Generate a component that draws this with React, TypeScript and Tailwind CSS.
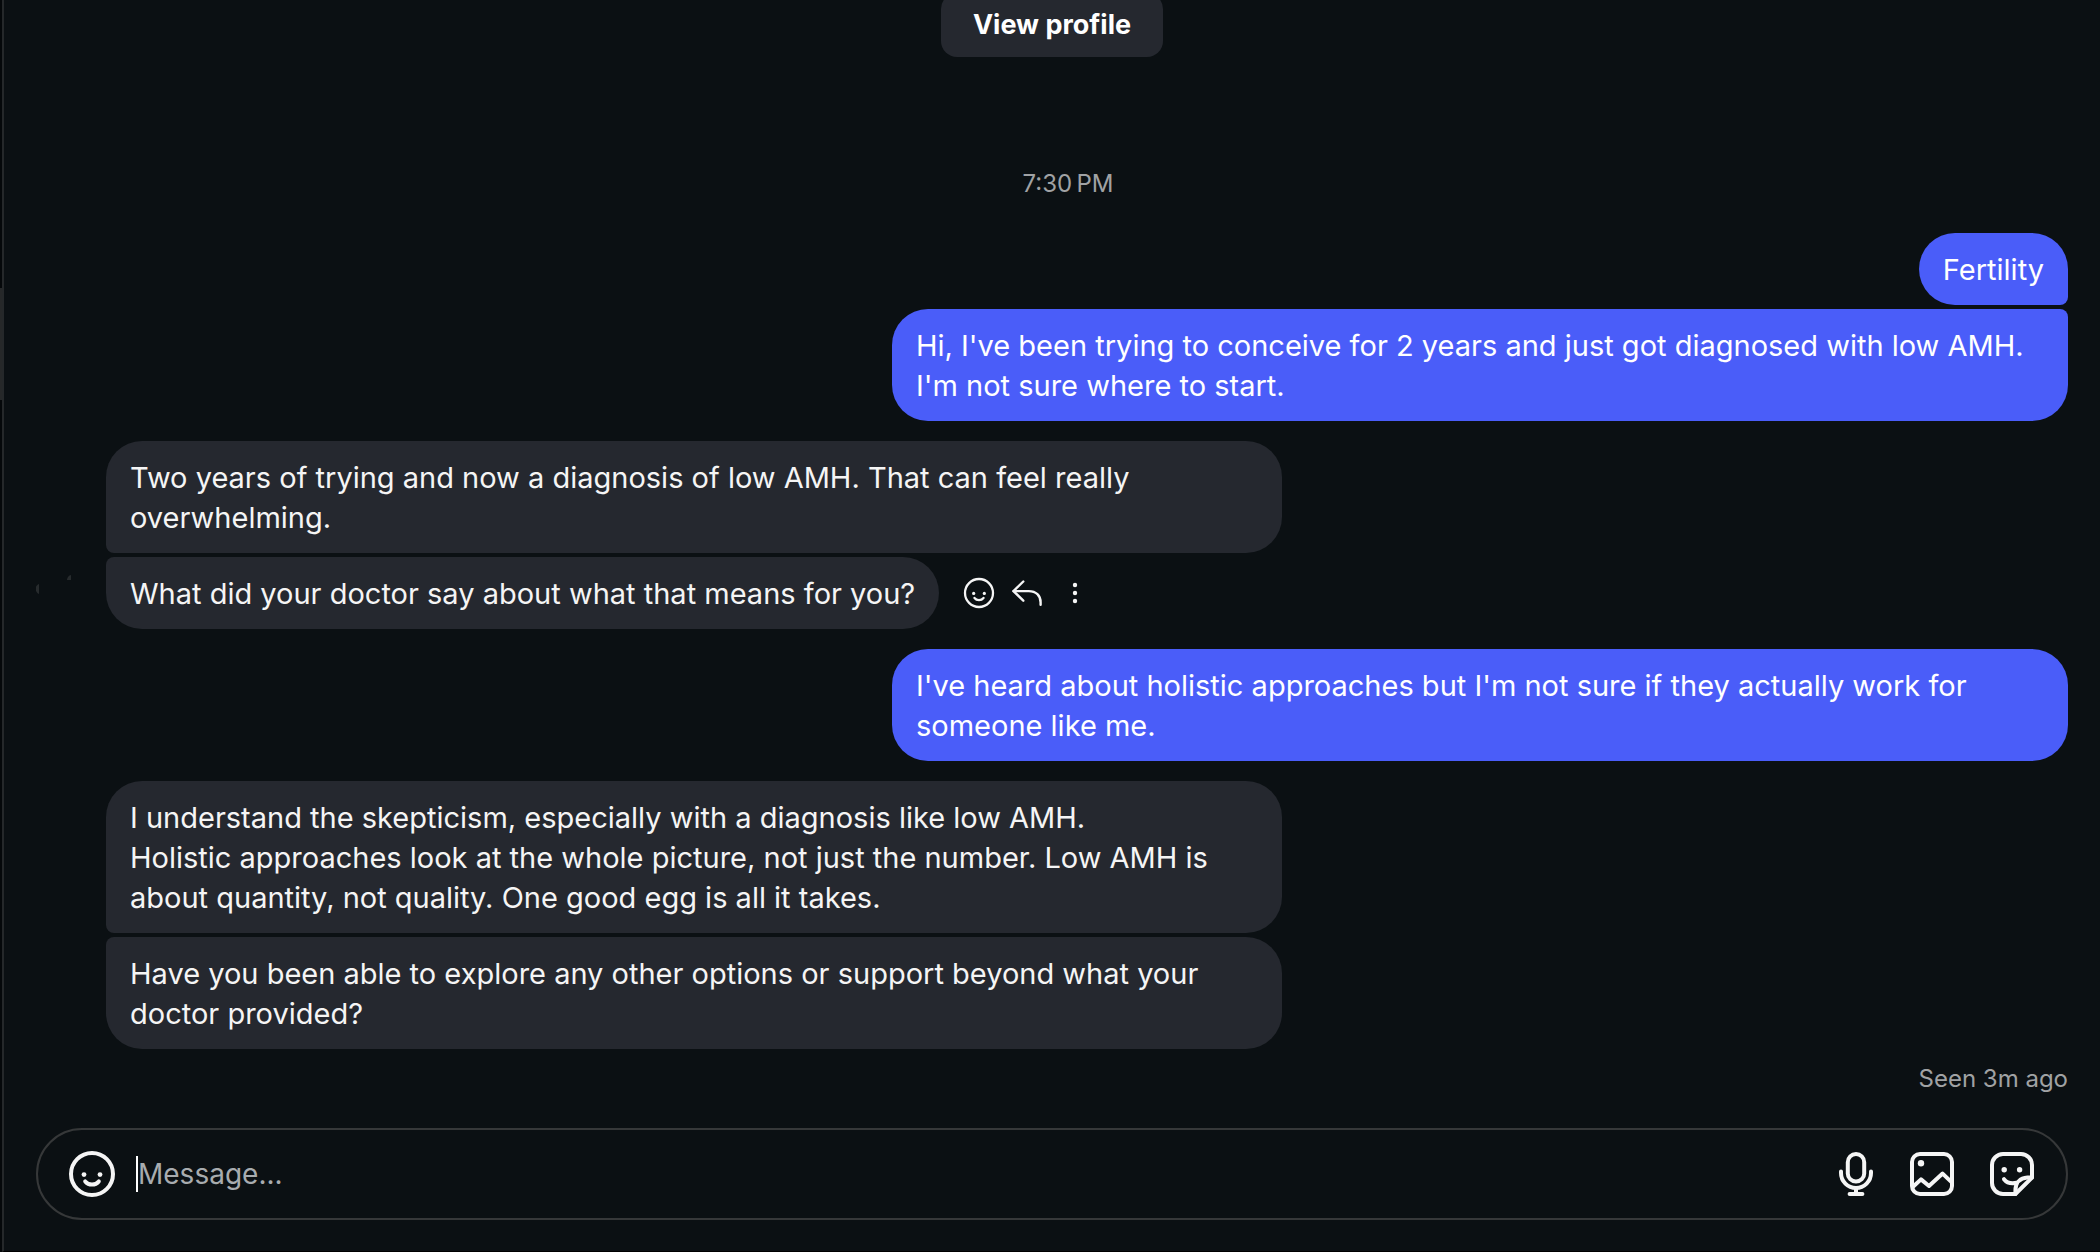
import { ReactNode } from 'react';

type Message = {
  from: 'me' | 'them';
  text: string;
  hovered?: boolean;
};

const groups: Message[][] = [
  [
    { from: 'me', text: 'Fertility' },
    {
      from: 'me',
      text: "Hi, I've been trying to conceive for 2 years and just got diagnosed with low AMH. I'm not sure where to start.",
    },
  ],
  [
    {
      from: 'them',
      text: 'Two years of trying and now a diagnosis of low AMH. That can feel really overwhelming.',
    },
    {
      from: 'them',
      text: 'What did your doctor say about what that means for you?',
      hovered: true,
    },
  ],
  [
    {
      from: 'me',
      text: "I've heard about holistic approaches but I'm not sure if they actually work for someone like me.",
    },
  ],
  [
    {
      from: 'them',
      text: 'I understand the skepticism, especially with a diagnosis like low AMH.\nHolistic approaches look at the whole picture, not just the number. Low AMH is about quantity, not quality. One good egg is all it takes.',
    },
    {
      from: 'them',
      text: 'Have you been able to explore any other options or support beyond what your doctor provided?',
    },
  ],
];

const SmileIcon = ({ className, strokeWidth }: { className: string; strokeWidth: number }) => (
  <svg viewBox="0 0 24 24" fill="none" stroke="currentColor" strokeWidth={strokeWidth} strokeLinecap="round" className={className}>
    <circle cx="12" cy="12" r="10.5" />
    <circle cx="8" cy="12.3" r="1.2" fill="currentColor" stroke="none" />
    <circle cx="16" cy="12.3" r="1.2" fill="currentColor" stroke="none" />
    <path d="M8.6 15.7c.8 1 2 1.6 3.4 1.6s2.6-.6 3.4-1.6" />
  </svg>
);

const ReplyIcon = () => (
  <svg viewBox="0 0 32 32" fill="none" stroke="currentColor" strokeWidth="2.4" strokeLinecap="round" strokeLinejoin="round" className="size-8">
    <path d="M12.3 4.5 2.5 14.1l9.8 9.6" />
    <path d="M2.5 14.1h15.3c7.2 0 11.8 4.6 11.8 11.2v2.5" />
  </svg>
);

const MoreIcon = () => (
  <svg viewBox="0 0 32 32" fill="currentColor" className="size-8">
    <circle cx="16" cy="8" r="2.2" />
    <circle cx="16" cy="16" r="2.2" />
    <circle cx="16" cy="24" r="2.2" />
  </svg>
);

const MicIcon = () => (
  <svg viewBox="2 0 20 24" fill="none" stroke="currentColor" strokeWidth="2" strokeLinecap="round" className="h-12 w-10">
    <rect x="7.9" y="2" width="8.2" height="13.8" rx="4.1" />
    <path d="M4.5 10.8v.7a7.5 7.5 0 0 0 15 0v-.7" />
    <path d="M12 19v3M8.8 22h6.4" />
  </svg>
);

const PhotoIcon = () => (
  <svg viewBox="0 0 24 24" fill="none" stroke="currentColor" strokeWidth="2" strokeLinecap="round" strokeLinejoin="round" className="size-12">
    <rect x="2" y="2" width="20" height="20" rx="4" />
    <circle cx="6.5" cy="6.6" r="1.6" fill="currentColor" stroke="none" />
    <path d="m2.5 18.4 4-3.7 4 3.3 6.8-6.2 4.6 4.4" />
  </svg>
);

const StickerIcon = () => (
  <svg viewBox="0 0 24 24" fill="none" stroke="currentColor" strokeWidth="2" strokeLinecap="round" strokeLinejoin="round" className="size-12">
    <path d="M13.7 22H7.5A5.5 5.5 0 0 1 2 16.5v-9A5.5 5.5 0 0 1 7.5 2h9A5.5 5.5 0 0 1 22 7.5v6.3Z" />
    <path d="M13.7 22v-1.6c0-4 2.4-6.4 6-6.6H22" />
    <circle cx="8.1" cy="9.9" r="1.35" fill="currentColor" stroke="none" />
    <circle cx="15.8" cy="9.9" r="1.35" fill="currentColor" stroke="none" />
    <path d="M8 14.6c1.3 1.7 3.8 2.4 6.4 1.8" />
  </svg>
);

const IconButton = ({ label, children }: { label: string; children: ReactNode }) => (
  <button type="button" aria-label={label} className="flex shrink-0 cursor-pointer hover:opacity-70">
    {children}
  </button>
);

// avatar that has barely faded in
const Avatar = () => (
  <svg viewBox="0 0 56 56" fill="#272b2d" className="absolute bottom-2 left-0 size-14">
    <path d="M3 19v10c-4-2-5-8 0-10zM35 10v5h-4c0-2 2-5 4-5z" />
  </svg>
);

const bubbleShape = (mine: boolean, first: boolean, last: boolean) => {
  const top = first ? '' : mine ? 'rounded-tr-lg' : 'rounded-tl-lg';
  const bottom = last ? '' : mine ? 'rounded-br-lg' : 'rounded-bl-lg';
  return `${top} ${bottom}`;
};

const Bubble = ({ message, first, last }: { message: Message; first: boolean; last: boolean }) => {
  const mine = message.from === 'me';
  return (
    <div className={`relative flex items-center ${mine ? 'justify-end' : 'pl-[70px]'}`}>
      {message.hovered && <Avatar />}
      <p
        className={`max-w-[1176px] whitespace-pre-line rounded-[36px] px-6 pt-[17px] pb-[15px] text-[29px] leading-10 ${
          mine ? 'bg-[#4a5df9] text-white' : 'bg-[#25282f] text-[#f5f5f5]'
        } ${bubbleShape(mine, first, last)}`}
      >
        {message.text}
      </p>
      {message.hovered && (
        <div className="ml-6 flex shrink-0 gap-4 text-[#f5f5f5]">
          <IconButton label="React">
            <SmileIcon className="size-8" strokeWidth={1.7} />
          </IconButton>
          <IconButton label="Reply">
            <ReplyIcon />
          </IconButton>
          <IconButton label="More">
            <MoreIcon />
          </IconButton>
        </div>
      )}
    </div>
  );
};

const Composer = () => (
  <form className="flex h-[92px] shrink-0 items-center rounded-full border-2 border-[#363839] px-[30px] text-[#f5f5f5]">
    <IconButton label="Choose an emoji">
      <SmileIcon className="size-12" strokeWidth={2} />
    </IconButton>
    <input
      type="text"
      aria-label="Message"
      placeholder="Message..."
      className="ml-5 h-9 min-w-0 flex-1 border-l-2 border-white bg-transparent text-[28px] outline-none placeholder:text-[#a8acaf]"
    />
    <div className="ml-8 flex items-center gap-8">
      <IconButton label="Voice clip">
        <MicIcon />
      </IconButton>
      <IconButton label="Add photo or video">
        <PhotoIcon />
      </IconButton>
      <IconButton label="Choose a sticker">
        <StickerIcon />
      </IconButton>
    </div>
  </form>
);

const App = () => {
  return (
    <div className="flex h-screen bg-[#0b1013] font-[Inter,sans-serif]">
      <div className="w-0.5 shrink-0 bg-[#05080a] pt-72">
        <div className="h-28 bg-[#262829]" />
      </div>
      <main className="flex min-w-0 flex-1 flex-col border-b border-l-2 border-b-black border-l-[#25282a] px-8 pb-[31px]">
        <div className="flex min-h-0 flex-1 flex-col justify-end overflow-hidden">
          <button
            type="button"
            className="h-16 shrink-0 cursor-pointer self-center rounded-2xl bg-[#25282f] px-8 text-[27px] font-bold text-white"
          >
            View profile
          </button>
          <time className="mt-[110px] mb-8 block pl-8 text-center text-2xl leading-[34px] text-[#a0a2a4]">
            7:30{'\u202f'}PM
          </time>
          <div className="flex flex-col gap-5">
            {groups.map((group, g) => (
              <div key={g} className="flex flex-col gap-1">
                {group.map((message, i) => (
                  <Bubble key={i} message={message} first={i === 0} last={i === group.length - 1} />
                ))}
              </div>
            ))}
          </div>
          <p className="mt-[13px] mb-8 text-right text-2xl leading-[34px] text-[#a0a2a4]">Seen 3m ago</p>
        </div>
        <Composer />
      </main>
    </div>
  );
};

export default App;
